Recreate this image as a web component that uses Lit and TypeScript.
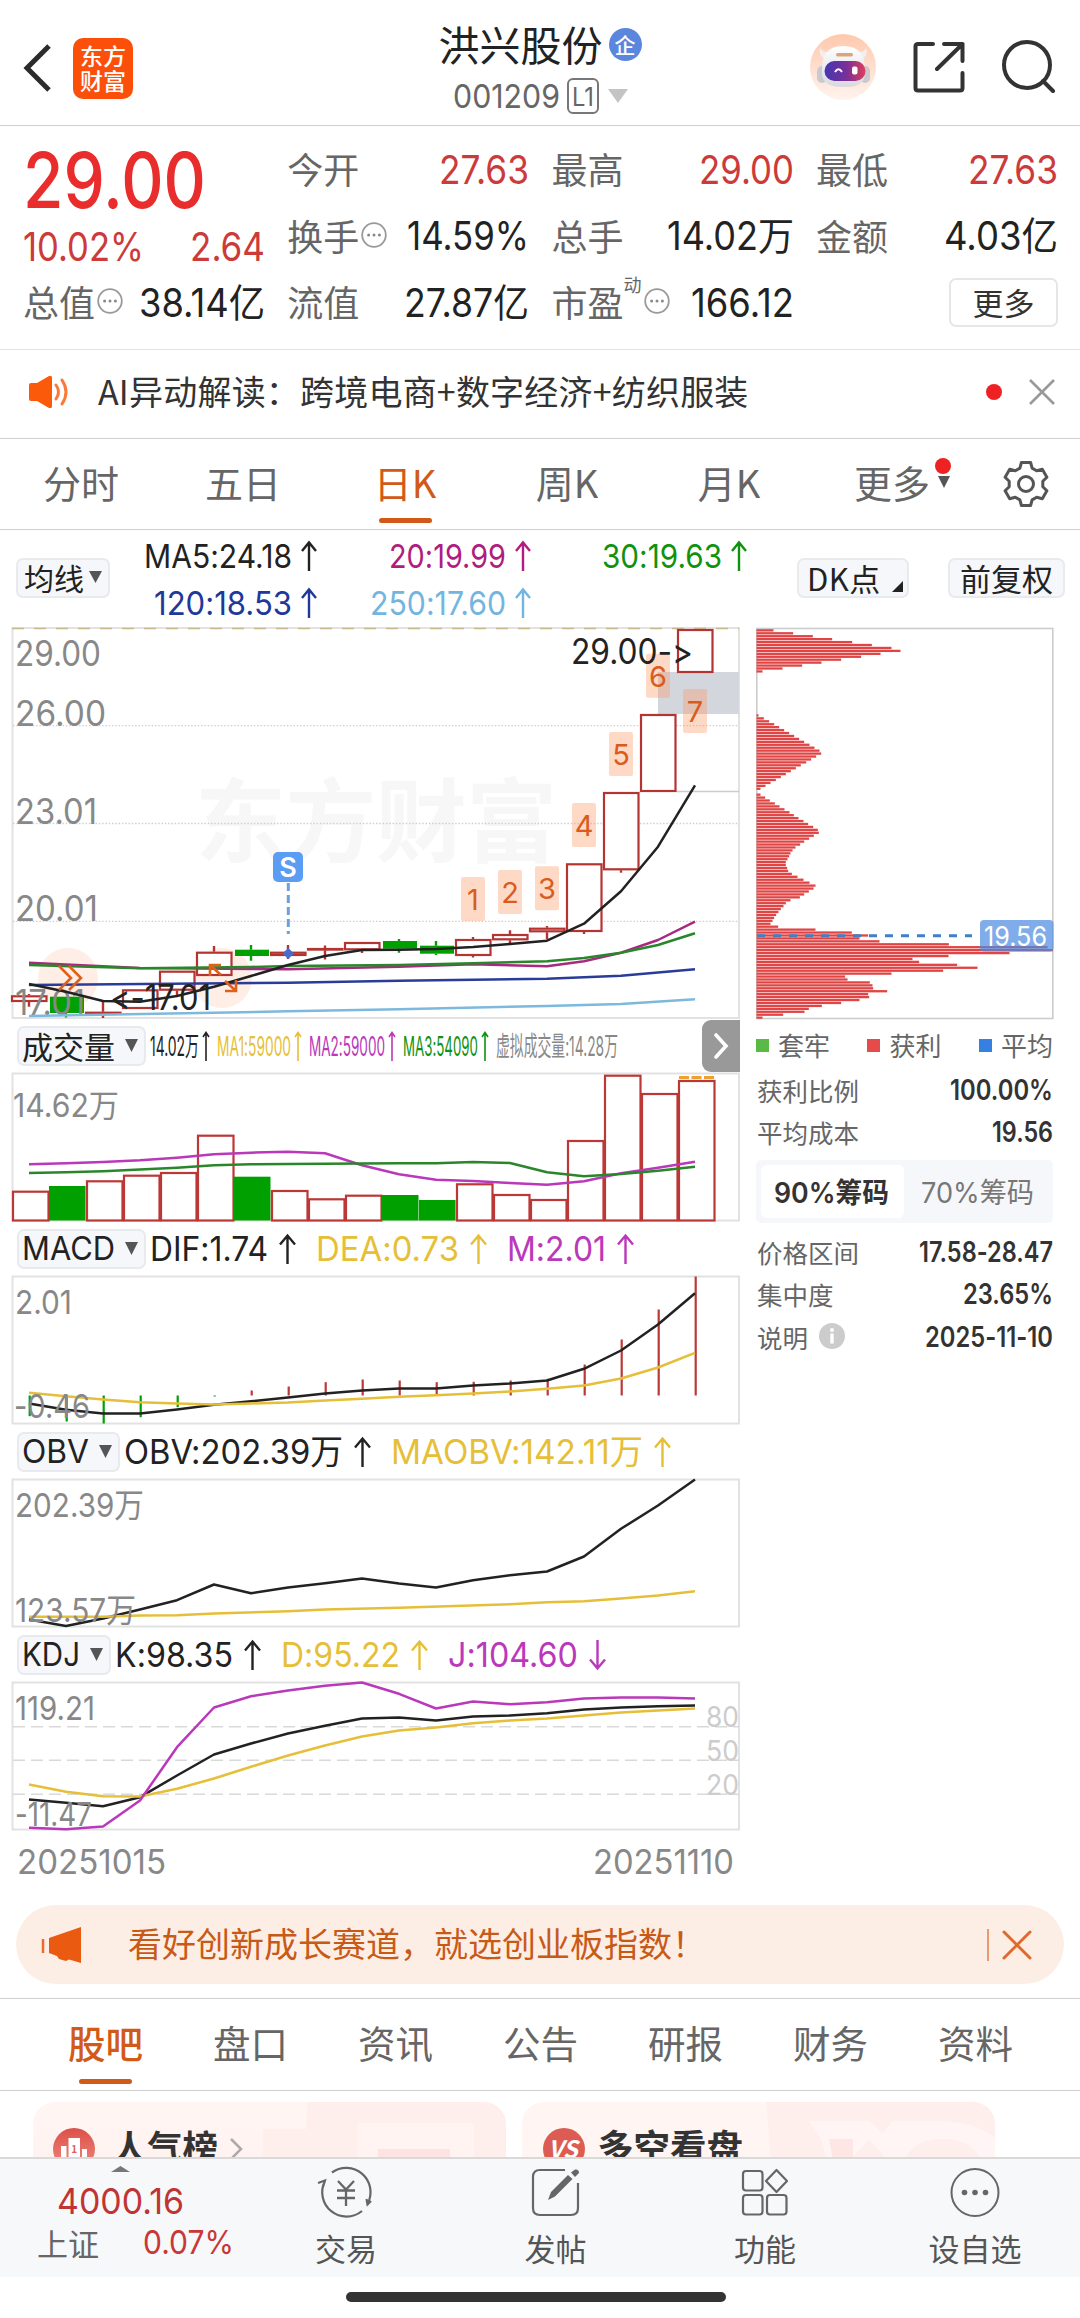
import { LitElement, html, svg, css, nothing } from "lit";
import { customElement } from "lit/decorators.js";

const INK = "#222222";
const GREY = "#888888";
const RED = "#bb3836";
const UP = "#b43432";
const GREEN = "#00a000";
const GOLD = "#e6bf38";
const VIOLET = "#ba38ba";
const FRAME = "#e2e2e2";

/** A numeric string set to an exact width, vertically centred on its cap height. */
const num = (text: string, w: number, size: number, color = "#333333", weight = 400) => {
  const h = Math.round(size * 1.1);
  return html`<svg class="num" width=${w} height=${h} viewBox="0 0 ${w} ${h}">
    <text x="0" y=${h / 2 + size * 0.364} font-size=${size} fill=${color} font-weight=${weight}
      textLength=${w} lengthAdjust="spacingAndGlyphs">${text}</text>
  </svg>`;
};

/** Text inside a chart. */
const mark = (text: string, x: number, y: number, w: number, size: number, color = GREY) =>
  svg`<text x=${x} y=${y} font-size=${size} fill=${color} textLength=${w} lengthAdjust="spacingAndGlyphs">${text}</text>`;

const arrow = (color: string, w = 17, down = false) => html`<svg class="num" width=${w} height="30" viewBox="0 0 ${w} 30">
  <path d=${down
    ? `M${w / 2} 0V28M1 ${28 - w / 2}L${w / 2} 28.5L${w - 1} ${28 - w / 2}`
    : `M${w / 2} 30V2M1 ${2 + w / 2}L${w / 2} 1.5L${w - 1} ${2 + w / 2}`}
    fill="none" stroke=${color} stroke-width=${w > 10 ? 2.4 : 1.6}></path>
</svg>`;

const X = (i: number) => 29 + i * 37;

/** Polyline through [index, y] pairs. */
const line = (pts: number[][], color: string, w = 2.5) =>
  svg`<polyline points=${pts.map(([i, y]) => `${X(i)},${y}`).join(" ")} fill="none" stroke=${color} stroke-width=${w} stroke-linejoin="round"></polyline>`;

const seq = (ys: number[]) => ys.map((y, i) => [i, y]);

// [body top, body bottom, wick top, wick bottom, 1 = up / 0 = down]
const CANDLES = [
  [995.3, 1002, 994, 1006.7, 1], [996.7, 1013, 996.7, 1017.5, 0], [1011.7, 1013, 1002, 1018, 1],
  [989.3, 1009, 989.3, 1009, 1], [970.7, 990.7, 970.7, 995, 1], [951.7, 976, 946, 976, 1],
  [949.7, 956, 945, 960.7, 0], [951.7, 956, 945, 959, 1], [948, 950.3, 945.5, 959.5, 1],
  [942, 950.3, 942, 953, 1], [941, 948.7, 939, 952.7, 0], [945.7, 953.7, 941, 955, 0],
  [939, 956, 937, 957.5, 1], [934, 940.3, 930.3, 943.3, 1], [927.7, 932.3, 926, 939.3, 1],
  [863.3, 932, 863.3, 934, 1], [792, 870.3, 792, 872.7, 1], [714, 792, 714, 792, 1], [629, 673, 629, 673, 1],
];

const VOLUME: [number, number][] = [
  [1190.7, 1], [1186, 0], [1180.3, 1], [1174.7, 1], [1172, 1], [1134.7, 1], [1176.7, 0], [1190, 1], [1198.3, 1],
  [1194.7, 1], [1195, 0], [1200, 0], [1183.3, 1], [1194, 1], [1199, 1], [1140, 1], [1074.7, 1], [1093, 1], [1080, 1],
];

const HIST = [1416.7, 1422, 1424, 1417.7, 1407.7, 1397, 1391, 1387, 1382.7, 1380, 1381, 1382.7, 1382.3, 1381, 1379.3, 1365, 1340, 1310, 1277];

const COUNT_TOPS = [877, 870, 866.3, 803, 732, 653.7, 689];

// Length of every price level in the chip distribution, top to bottom, in thirds of a pixel.
const CHIPS = [
  51, 110, 169, 227, 287, 346, 405, 432, 372, 314, 254, 195, 137, 78, 18,
  0, 0, 0, 0, 0, 0, 0, 0, 0, 0, 0, 0, 0, 0,
  6, 22, 38, 53, 68, 83, 98, 113, 128, 143, 159, 174, 189, 194, 179, 164, 149, 133, 118, 103, 88, 73, 58, 42, 27, 12,
  0, 12, 26, 40, 55, 69, 84, 99, 112, 126, 141, 155, 170, 184, 187, 172, 158, 143, 131, 117, 108, 102, 98, 93, 88, 88,
  92, 95, 106, 123, 141, 159, 177, 171, 157, 143, 130, 102, 88, 81, 73, 66, 59, 53, 48, 42, 65, 177, 286, 335, 309,
  369, 577, 873, 889, 759, 576, 468, 488, 602, 663, 560, 405, 266, 273, 340, 348, 350, 392, 335, 338, 309, 254, 196,
  157, 144, 80, 18,
];

const gearPath = () => {
  const pts: string[] = [];
  for (let k = 0; k < 6; k++) {
    for (const [da, r] of [[-21, 17], [-12, 22], [12, 22], [21, 17]]) {
      const a = ((k * 60 - 90 + da) * Math.PI) / 180;
      pts.push(`${(24 + r * Math.cos(a)).toFixed(1)} ${(24 + r * Math.sin(a)).toFixed(1)}`);
    }
  }
  return `M${pts.join("L")}Z`;
};

const dots = html`<svg class="dots" width="26" height="28" viewBox="0 0 26 28">
  <circle cx="13" cy="14" r="11.8" fill="none" stroke="#9a9a9a" stroke-width="1.8"></circle>
  <circle cx="7.6" cy="14" r="1.5" fill="#888"></circle><circle cx="13" cy="14" r="1.5" fill="#888"></circle><circle cx="18.4" cy="14" r="1.5" fill="#888"></circle>
</svg>`;

const caret = (w = 12, h = 12, color = "#555") =>
  html`<svg class="num" width=${w} height=${h} viewBox="0 0 ${w} ${h}"><path d="M0 0H${w}L${w / 2} ${h}Z" fill=${color}></path></svg>`;

type Item = [string, number, string, boolean?];

@customElement("app-root")
export class AppRoot extends LitElement {
  static styles = css`
    :host { display: block; width: 1080px; height: 2318px; background: #fff; overflow: hidden;
      font-family: Inter, "Noto Sans CJK SC", sans-serif; color: #333; line-height: 1; }
    * { box-sizing: border-box; }
    svg { display: block; flex: none; }
    text { font-family: Inter, "Noto Sans CJK SC", sans-serif; font-variant-ligatures: none; font-feature-settings: "calt" 0; }
    .num { overflow: visible; }
    .cjk { font-family: "Noto Sans CJK SC", sans-serif; white-space: nowrap; }

    .top { height: 126px; border-bottom: 1px solid #cfcfcf; display: grid; grid-template-columns: 400px 1fr 400px; padding: 0 23px; margin: 0; }
    .top-left { display: flex; align-items: center; gap: 20px; padding-top: 9px; }
    .logo { width: 60px; height: 61px; border-radius: 10px; background: #fb4f0a; color: #fff; font-size: 23px; font-weight: 500;
      line-height: 25px; display: grid; place-content: center; text-align: center; }
    .title { display: flex; flex-direction: column; align-items: center; padding-top: 21px; }
    .name { display: flex; align-items: center; gap: 6px; font-size: 41px; height: 44px; color: #222; }
    .badge { width: 33px; height: 33px; border-radius: 50%; background: #5b86de; color: #fff; font-size: 21px; font-weight: 500; display: grid; place-items: center; margin-top: 3px; }
    .code { display: flex; align-items: center; height: 62px; }
    .level { width: 32px; height: 36px; border: 2px solid #777; border-radius: 6px; margin: 0 9px 0 7px; display: grid; place-items: center; }
    .top-right { display: flex; align-items: center; justify-content: flex-end; padding: 7px 2px 0 0; gap: 36px; }

    .quote { height: 224px; border-bottom: 1px solid #e2e2e2; padding: 10px 22px 0 23px; display: grid; grid-template-columns: repeat(4, 242px); column-gap: 22.3px; }
    .col { display: grid; grid-template-rows: 66px 67px 66px; }
    .col.first { grid-template-rows: 87px 46px 66px; }
    .cell { display: flex; align-items: center; justify-content: space-between; }
    .key { display: flex; align-items: center; font-size: 36px; color: #666; height: 40px; padding-bottom: 2px; }
    .sup { font-size: 18px; align-self: flex-start; margin-top: -7px; }
    .dots { margin: 0 1px 0 2px; }
    .more { margin-left: auto; width: 109px; height: 49px; border: 2px solid #e6e6e6; border-radius: 7px; font-size: 31px; color: #333; display: grid; place-items: center; padding-bottom: 2px; }

    .ai { height: 89px; border-bottom: 1px solid #cfcfcf; display: flex; align-items: center; padding: 0 25px 4px 29px; font-size: 34px; color: #333; }
    .ai .msg { margin-left: 28px; flex: 1; letter-spacing: 0.2px; padding-bottom: 2px; }
    .dot { width: 16px; height: 16px; border-radius: 50%; background: #ee2222; }
    .ai .close { margin-left: 27px; }

    .tabs { height: 91px; border-bottom: 1px solid #cfcfcf; display: grid; grid-template-columns: repeat(5, 162px) 150px 120px; font-size: 38px; color: #666; }
    .tab { position: relative; display: flex; align-items: center; justify-content: center; padding-bottom: 4px; }
    .tab.on { color: #d25a18; }
    .tab.on::after { content: ""; position: absolute; bottom: 6px; left: 50%; width: 53px; height: 5px; margin-left: -26.5px; border-radius: 3px; background: #d25a18; }
    .tab .dot { position: absolute; left: 125px; top: 19px; }
    .tab.more-tab { justify-content: flex-start; padding-left: 44px; gap: 8px; }
    .tab.gear { padding: 0 0 0 12px; }

    .ma { height: 96px; display: flex; align-items: center; padding: 0 15px 0 16px; }
    .pill { height: 40px; border: 2px solid #e8eaee; border-radius: 7px; background: #f6f7fa; font-size: 30px; color: #222; display: flex; align-items: center; flex: none; padding: 0 6px 2px; gap: 5px; }
    .pill.end { width: 112px; justify-content: space-between; padding: 0 4px 2px 8px; letter-spacing: 0.4px; font-size: 31px; }
    .pill.adjust { width: 117px; justify-content: center; margin-left: auto; font-size: 31px; }
    .pill.end svg { align-self: flex-end; margin-bottom: 2px; }
    .ma-grid { display: grid; grid-template-columns: 208px 214px 216px; grid-template-rows: 47px 47px; margin: 3px 50px 0 -1px; }
    .ma-item { display: flex; align-items: center; justify-content: flex-end; gap: 9px; }

    .body { display: flex; height: 1264px; }
    .charts { width: 751px; flex: none; }
    .ind { height: 53px; display: flex; align-items: center; padding-left: 17px; }
    .ind .pill { justify-content: space-between; padding: 0 6px 1px 3px; margin-right: 4px; }
    .ind.vol { height: 52px; }
    .ind.vol .pill { font-size: 31px; }
    .item { display: flex; align-items: center; gap: 11px; margin-right: 20px; }
    .vol .item { gap: 3px; margin-right: 7px; }
    .expand { margin-left: auto; margin-right: 11px; width: 38px; height: 52px; border-radius: 9px 0 0 9px; background: #999; display: grid; place-items: center; }
    .dates { display: flex; justify-content: space-between; padding: 12px 17px 0; }

    .chips { width: 329px; padding: 0 27px 0 5px; }
    .legend { display: flex; justify-content: space-between; height: 46px; align-items: center; font-size: 26px; color: #666; margin-top: 2px; }
    .legend span { display: flex; align-items: center; gap: 9px; }
    .sq { width: 13px; height: 13px; }
    .sq.g { background: #5bb946; } .sq.r { background: #e64b4b; } .sq.b { background: #3580e0; }
    .row { display: flex; justify-content: space-between; align-items: center; height: 42.5px; font-size: 25.5px; color: #666; padding-left: 1px; }
    .row .info { display: flex; align-items: center; gap: 11px; }
    .i { width: 26px; height: 26px; border-radius: 50%; background: #ccc; display: grid; place-items: center; }
    .toggle { height: 63px; margin: 7px 0 7px; background: #f6f7fa; border-radius: 5px; padding: 5px; display: grid; grid-template-columns: 143px 1fr; }
    .toggle div { display: grid; place-items: center; border-radius: 6px; padding: 1px 2px 0 0; }
    .toggle .off { padding: 1px 0 0 3px; }
    .toggle .on { background: #fff; }

    .promo { margin: 15px 16px 0; height: 79px; border-radius: 40px; background: #fdeee5; display: flex; align-items: center; padding: 0 32px 0 25px; font-size: 34px; color: #c85a18; }
    .promo .msg { margin-left: 46px; flex: 1; padding-bottom: 3px; }
    .vline { width: 2px; height: 32px; background: #e79a72; margin-right: 13px; }
    .sections { margin-top: 14px; height: 93px; border-top: 1px solid #cfcfcf; border-bottom: 1px solid #cfcfcf; display: grid; grid-template-columns: repeat(7, 145px); padding-left: 33px; font-size: 37.5px; color: #666; }
    .sections .tab { padding-bottom: 5px; }
    .sections .tab.on { font-weight: 500; }
    .cards { height: 66px; padding: 11px 33px 0; display: flex; gap: 16px; overflow: hidden; }
    .card { width: 473px; height: 120px; flex: none; border-radius: 22px; overflow: hidden; }
    .card text { font-family: "Noto Sans CJK SC", sans-serif; font-weight: 700; }
    .nav { height: 120px; background: #f7f8fa; border-top: 2px solid #d9d9d9; display: grid; grid-template-columns: 241px 210px 209px 210px 210px; }
    .index { display: flex; flex-direction: column; align-items: center; padding-top: 7px; }
    .index-val { margin: 9px 0 1px; }
    .index-row { display: flex; align-items: center; gap: 44px; font-size: 31px; color: #666; padding-left: 37px; width: 100%; height: 40px; }
    .nav-item { display: flex; flex-direction: column; align-items: center; font-size: 31px; color: #555; padding-top: 7px; gap: 14px; }
    .home { width: 380px; height: 10px; border-radius: 5px; background: #333; margin: 15px 0 0 346px; }
  `;

  private header() {
    return html`<header class="top">
      <div class="top-left">
        <svg width="30" height="50" viewBox="0 0 30 50"><path d="M26 3L4 25L26 47" fill="none" stroke="#2b2b2b" stroke-width="5"></path></svg>
        <div class="logo cjk">东方<br />财富</div>
      </div>
      <div class="title">
        <div class="name cjk">洪兴股份<span class="badge">企</span></div>
        <div class="code">${num("001209", 107, 33, "#666")}<span class="level">${num("L1", 22, 26, "#666")}</span>${caret(20, 14, "#c4c4c4")}</div>
      </div>
      <div class="top-right">
        <svg width="68" height="68" viewBox="0 0 68 68">
          <defs>
            <linearGradient id="halo" x1="0" y1="0" x2="0" y2="1"><stop offset="0" stop-color="#ffc8ad"></stop><stop offset="1" stop-color="#fff4ee"></stop></linearGradient>
            <linearGradient id="visor"><stop offset="0" stop-color="#4636b0"></stop><stop offset=".55" stop-color="#7a3098"></stop><stop offset="1" stop-color="#e04058"></stop></linearGradient>
            <linearGradient id="shell" x1="0" y1="0" x2="0" y2="1"><stop offset="0" stop-color="#ffffff"></stop><stop offset="1" stop-color="#d9d9df"></stop></linearGradient>
          </defs>
          <circle cx="34" cy="34" r="33" fill="url(#halo)"></circle>
          <path d="M11 15Q9 24 17 26L22 19Q14 20 11 15ZM57 15Q60 24 52 26L47 19Q55 20 57 15Z" fill="#f3eeee"></path>
          <rect x="8" y="33" width="10" height="17" rx="5" fill="#c9c9d0"></rect><rect x="51" y="33" width="10" height="17" rx="5" fill="#c9c9d0"></rect>
          <path d="M13 38Q12 13 34 13Q57 13 56 38Q57 55 35 54Q12 55 13 38Z" fill="url(#shell)"></path>
          <rect x="27" y="20" width="17" height="3.5" rx="1.7" fill="#d8a57c"></rect>
          <rect x="15.500" y="28" width="41" height="20" rx="10" fill="url(#visor)"></rect>
          <path d="M26 39Q29.500 33.500 33 39" fill="none" stroke="#fff" stroke-width="2"></path><rect x="43" y="33.500" width="5.500" height="8" rx="2" fill="#fff"></rect>
        </svg>
        <svg width="52" height="52" viewBox="0 0 52 52"><path d="M20 3H5Q2.500 3 2.500 5.500V47Q2.500 49.500 5 49.500H47Q49.500 49.500 49.500 47V32M31 3H49.500V20M49.500 3L24 28" fill="none" stroke="#333" stroke-width="4" stroke-linecap="round" stroke-linejoin="round"></path></svg>
        <svg width="54" height="54" viewBox="0 0 54 54"><circle cx="26" cy="25" r="23" fill="none" stroke="#333" stroke-width="4"></circle><path d="M42 41L52 51" stroke="#333" stroke-width="4" stroke-linecap="round"></path></svg>
      </div>
    </header>`;
  }

  private cell(key: unknown, value: string, w: number, color = "#222") {
    return html`<div class="cell"><span class="key cjk">${key}</span>${num(value, w, 39, color)}</div>`;
  }

  private quote() {
    const r = "#cc3a3a";
    return html`<section class="quote">
      <div class="col first">
        <div class="cell">${num("29.00", 183, 77, "#e92c2c", 500)}</div>
        <div class="cell">${num("10.02%", 121, 39, r)}${num("2.64", 75, 39, r)}</div>
        ${this.cell(html`总值${dots}`, "38.14亿", 126)}
      </div>
      <div class="col">
        ${this.cell("今开", "27.63", 90, r)}${this.cell(html`换手${dots}`, "14.59%", 122)}${this.cell("流值", "27.87亿", 125)}
      </div>
      <div class="col">
        ${this.cell("最高", "29.00", 95, r)}${this.cell("总手", "14.02万", 127)}
        ${this.cell(html`市盈<span class="sup">动</span>${dots}`, "166.12", 103)}
      </div>
      <div class="col">
        ${this.cell("最低", "27.63", 90, r)}${this.cell("金额", "4.03亿", 114)}
        <div class="cell"><span class="more cjk">更多</span></div>
      </div>
    </section>`;
  }

  private notice() {
    return html`<section class="ai">
      <svg width="41" height="32" viewBox="0 0 41 32"><path d="M0 9Q0 7 2 7H8L20 0Q23 -1 23 2V30Q23 33 20 32L8 25H2Q0 25 0 23Z" fill="#fa5a0a"></path><path d="M27 9Q32 16 27 23M33 4Q41 16 33 28" fill="none" stroke="#fa7a3a" stroke-width="3" stroke-linecap="round"></path></svg>
      <span class="msg cjk">AI异动解读：跨境电商+数字经济+纺织服装</span>
      <span class="dot"></span>
      <svg class="close" width="26" height="26" viewBox="0 0 26 26"><path d="M1 1L25 25M25 1L1 25" stroke="#999" stroke-width="2.600"></path></svg>
    </section>`;
  }

  private periods() {
    return html`<nav class="tabs cjk">
      ${["分时", "五日", "日K", "周K", "月K"].map((t) => html`<div class="tab ${t === "日K" ? "on" : ""}">${t}</div>`)}
      <div class="tab more-tab">更多${caret(12, 12)}<span class="dot"></span></div>
      <div class="tab gear"><svg width="48" height="48" viewBox="0 0 48 48"><path d=${gearPath()} fill="none" stroke="#555" stroke-width="3" stroke-linejoin="round"></path><circle cx="24" cy="24" r="7.500" fill="none" stroke="#555" stroke-width="3"></circle></svg></div>
    </nav>`;
  }

  private averages() {
    const items: Item[] = [
      ["MA5:24.18", 148, INK], ["20:19.99", 117, "#b01c80"], ["30:19.63", 120, "#0f930f"],
      ["120:18.53", 138, "#20389a"], ["250:17.60", 136, "#72b6e0"],
    ];
    return html`<section class="ma">
      <div class="pill cjk">均线${caret(13, 12)}</div>
      <div class="ma-grid">${items.map(([t, w, c]) => html`<div class="ma-item">${num(t, w, 33, c)}${arrow(c, 16)}</div>`)}</div>
      <div class="pill end cjk">DK点<svg width="11" height="11" viewBox="0 0 11 11"><path d="M11 0V11H0Z" fill="#222"></path></svg></div>
      <div class="pill adjust cjk">前复权</div>
    </section>`;
  }

  private indicator(name: string, w: number, items: Item[], cls = "", size = 34) {
    const small = cls === "vol";
    return html`<div class="ind ${cls}">
      <div class="pill cjk" style="width:${w}px">${/[A-Z]/.test(name) ? num(name, w - 36, 33, INK) : html`<span>${name}</span>`}${caret(13, 13)}</div>
      ${items.map(([t, tw, c, down]) => html`<div class="item">${num(t, tw, size, c)}${t.startsWith("虚") ? nothing : arrow(c, small ? 8 : 17, down)}</div>`)}
      ${small ? html`<div class="expand"><svg width="16" height="26" viewBox="0 0 16 26"><path d="M3 2L13 13L3 24" fill="none" stroke="#fff" stroke-width="3.600" stroke-linecap="round"></path></svg></div>` : nothing}
    </div>`;
  }

  private frame(y: number, h: number, body: unknown) {
    return html`<svg class="num" width="751" height=${h + 3} viewBox="0 ${y - 1.5} 751 ${h + 3}">
      <rect x="12.500" y=${y} width="726.500" height=${h} fill="none" stroke=${FRAME} stroke-width="2"></rect>${body}
    </svg>`;
  }

  private kline() {
    return html`<svg class="num" width="751" height="394" viewBox="0 626 751 394">
      <text x="195" y="855" font-size="91" textLength="362" font-weight="700" fill="#f7f7f7">东方财富</text>
      <rect x="12.500" y="628" width="726.500" height="390" fill="none" stroke=${FRAME} stroke-width="2"></rect>
      ${[725.7, 823.5, 921.3].map((y) => svg`<path d="M13 ${y}H739" stroke="#cfcfcf" stroke-width="1.300" stroke-dasharray="1.500 1.800"></path>`)}
      <path d="M12 628.500H739" stroke="#c9b98e" stroke-width="1.500" stroke-dasharray="12 10"></path>
      <path d="M676 791.500H739" stroke="#ccc" stroke-width="1.500"></path>
      <rect x="658" y="672" width="81" height="42" fill="#d3d6dc"></rect>
      <circle cx="68" cy="978" r="30" fill="#feeee6"></circle><circle cx="222" cy="978" r="30" fill="#feeee6"></circle>
      ${mark("29.00", 15, 665.5, 86, 35)}${mark("26.00", 15, 725.5, 91, 35)}${mark("23.01", 15, 823.5, 82, 35)}${mark("20.01", 15, 921, 83, 35)}
      ${CANDLES.map(([t, b, wt, wb, up], i) => {
        const c = up ? UP : GREEN;
        const x = X(i);
        return svg`<path d="M${x} ${wt}V${t}M${x} ${b}V${wb}" stroke=${c} stroke-width="2.400"></path>
          ${up
            ? svg`<rect x=${x - 17} y=${t + 1} width="34.500" height=${Math.max(b - t - 2, 0.6)} fill=${i === 18 || b - t < 3 ? "none" : "#fff"} stroke=${c} stroke-width="2.200"></rect>`
            : svg`<rect x=${x - 16} y=${t} width="34" height=${b - t} fill=${c}></rect>`}`;
      })}
      ${mark("17.01", 15, 1015, 70, 35)}
      ${line([[0, 1016], [7, 1011.3], [10, 1009.3], [14, 1006], [16, 1004], [18, 999.3]], "#7db9dd")}
      ${line([[0, 985], [7, 982.7], [10, 980.7], [14, 978.7], [16, 975.7], [18, 969.3]], "#2a3c98")}
      ${line([[0, 962.7], [3, 968], [7, 969.3], [10, 966.7], [12, 964.3], [14, 966.3], [15, 961.3], [16, 952.7], [17, 940], [18, 921.7]], "#a82a80")}
      ${line([[0, 965], [3, 968.3], [6, 967], [7, 966], [10, 965], [12, 963.3], [14, 961.3], [15, 958], [16, 952.7], [17, 945], [18, 933.3]], "#2a862a")}
      ${line(seq([984, 991.7, 1001, 1001.7, 996, 986.7, 976, 965, 956, 950, 949.7, 949, 947, 944, 940.7, 923.7, 891.3, 846.7, 785.3]), INK)}
      <path d="M59 966L71 978L59 990M69 966L81 978L69 990" fill="none" stroke="#e0601a" stroke-width="2.600"></path>
      <path d="M221 975L210 965M210 976V965H221M225 981L236 991M236 980V991H225" fill="none" stroke="#e0601a" stroke-width="2.600"></path>
      <path d="M288.300 883V934" stroke="#6ea0d8" stroke-width="3" stroke-dasharray="8 4"></path>
      <path d="M288.300 948L294 953.500L288.300 959L282.500 953.500Z" fill="#4a6cc8"></path>
      <rect x="273" y="852" width="30" height="30" rx="5" fill="#5b9cf4"></rect>
      <text x="288" y="876.500" text-anchor="middle" font-size="27" font-weight="600" fill="#fff">S</text>
      ${COUNT_TOPS.map((y, i) => svg`<rect x=${X(12 + i) - 12} y=${y} width="24" height="44" rx="2" fill="#f99a6a" fill-opacity=".38"></rect>
        <text x=${X(12 + i)} y=${y + 33} text-anchor="middle" font-size="29" fill="#d95c1c">${i + 1}</text>`)}
      ${mark("<-17.01", 110, 1010, 101, 35, INK)}
      ${mark("29.00->", 571, 663.5, 122, 35, INK)}
    </svg>`;
  }

  private volume() {
    return this.frame(1073.5, 147, svg`
      ${mark("14.62万", 13, 1116.5, 106, 32)}
      ${VOLUME.map(([y, up], i) => {
        const x = X(i) - 17;
        return up
          ? svg`<rect x=${x + 1} y=${y + 1} width="35.500" height=${1219.5 - y} fill="#fff" stroke=${RED} stroke-width="2.200"></rect>`
          : svg`<rect x=${x} y=${y} width="36.500" height=${1220.5 - y} fill=${GREEN}></rect>`;
      })}
      <path d="M679 1077.500H716" stroke="#f0a030" stroke-width="3" stroke-dasharray="10 2.500"></path>
      ${line(seq([1164.3, 1163.3, 1162, 1160.3, 1157.7, 1154.3, 1152.7, 1151.7, 1153.3, 1165.3, 1174.3, 1179.7, 1181, 1183, 1184.7, 1181.3, 1173.3, 1167.7, 1161.7]), VIOLET)}
      ${line(seq([1173, 1172.3, 1171.3, 1169.5, 1167.7, 1165.3, 1164.3, 1164, 1163.7, 1163.5, 1163.3, 1163.3, 1162, 1163, 1172.3, 1176.3, 1174, 1170.7, 1166.7]), "#2a862a")}`);
  }

  private macd() {
    return this.frame(1277, 147, svg`
      ${HIST.map((y, i) => svg`<path d="M${X(i) + 0.7} 1396V${y}" stroke=${y > 1396 ? GREEN : RED} stroke-width="2.200"></path>`)}
      ${line(seq([1404, 1410.3, 1414, 1414, 1410, 1405.3, 1401.7, 1398, 1394, 1391, 1389, 1389, 1386, 1384, 1381, 1369.3, 1351, 1325, 1293.7]), INK)}
      ${line(seq([1393.3, 1396.7, 1400, 1402.7, 1404, 1405, 1404, 1403, 1401, 1399.3, 1397.3, 1395.7, 1394, 1392, 1389.3, 1386, 1379, 1368, 1353.3]), GOLD)}
      ${mark("2.01", 15, 1314, 57, 33)}${mark("-0.46", 14, 1418.5, 76, 33)}`);
  }

  private obv() {
    return this.frame(1480, 147, svg`
      ${line(seq([1620, 1626.5, 1619, 1610, 1600.7, 1585, 1593.7, 1588, 1583.7, 1579, 1584, 1588, 1580.7, 1575.7, 1572, 1557, 1529.3, 1506, 1480]), INK)}
      ${line([[0, 1617.3], [2, 1617.3], [3, 1616], [4, 1615.7], [5, 1614], [7, 1611.7], [8, 1610], [10, 1608.3], [13, 1604.7], [14, 1602.7], [15, 1601.7], [16, 1599], [17, 1596], [18, 1591.7]], GOLD)}
      ${mark("202.39万", 15, 1517.5, 129, 33)}${mark("123.57万", 15, 1622.500, 121, 33)}`);
  }

  private kdj() {
    return this.frame(1683, 147, svg`
      ${[1727.3, 1760.7, 1794.7].map((y) => svg`<path d="M13 ${y}H739" stroke="#d9d9d9" stroke-width="1.600" stroke-dasharray="12 6"></path>`)}
      ${mark("80", 706, 1727, 33, 29, "#ccc")}${mark("50", 706, 1761, 33, 29, "#ccc")}${mark("20", 706, 1795, 33, 29, "#ccc")}
      ${line(seq([1800, 1803.3, 1806.7, 1797.7, 1776, 1755, 1744, 1734, 1726.3, 1719, 1718, 1721, 1717, 1716, 1713.7, 1710, 1708, 1706.7, 1706]), INK)}
      ${line(seq([1785, 1792.3, 1796.7, 1797, 1789.3, 1779, 1767.3, 1756, 1746, 1737, 1731, 1728, 1723.7, 1721, 1719, 1716, 1713, 1711, 1709]), GOLD)}
      ${line(seq([1828.3, 1829.7, 1827, 1801, 1747.7, 1708, 1696.7, 1691, 1686.3, 1683, 1694.3, 1709, 1702, 1704.7, 1702.7, 1699, 1698, 1698, 1699]), VIOLET)}
      ${mark("119.21", 15, 1720.7, 80, 33)}${mark("-11.47", 15, 1826, 77, 33)}`);
  }

  private chips() {
    const row = (k: unknown, v: string, w: number) => html`<div class="row cjk">${k}${num(v, w, 28, "#333", 600)}</div>`;
    return html`<aside class="chips">
      <svg width="298" height="394" viewBox="755 626 298 394">
        <rect x="755.800" y="628.500" width="296" height="390" fill="none" stroke="#ccc" stroke-width="1.600"></rect>
        ${CHIPS.map((l, i) => (l ? svg`<rect x="755.500" y=${629.2 + i * 2.934} width=${l / 3} height="2.300" fill="#e04444"></rect>` : nothing))}
        <path d="M756 935.700H971" stroke="#4080c4" stroke-width="3" stroke-dasharray="8 8"></path>
        <rect x="979" y="920" width="73.500" height="31.500" rx="4" fill="#4a8ae0" fill-opacity=".7"></rect>
        <text x="983" y="945.500" font-size="27" fill="#fff" textLength="63" lengthAdjust="spacingAndGlyphs">19.56</text>
      </svg>
      <div class="legend cjk"><span><i class="sq g"></i>套牢</span><span><i class="sq r"></i>获利</span><span><i class="sq b"></i>平均</span></div>
      ${row("获利比例", "100.00%", 103)}${row("平均成本", "19.56", 61)}
      <div class="toggle"><div class="on">${num("90%筹码", 115, 28, "#333", 600)}</div><div class="off">${num("70%筹码", 113, 28, "#777")}</div></div>
      ${row("价格区间", "17.58-28.47", 134)}${row("集中度", "23.65%", 90)}
      ${row(html`<span class="info">说明<i class="i"><svg width="6" height="16" viewBox="0 0 6 16"><circle cx="3" cy="2" r="2" fill="#fff"></circle><rect x="1.300" y="5.500" width="3.400" height="10" fill="#fff"></rect></svg></i></span>`, "2025-11-10", 128)}
    </aside>`;
  }

  private promo() {
    return html`<section class="promo">
      <svg width="41" height="36" viewBox="0 0 41 36"><path d="M2 12V26" stroke="#ee6a2a" stroke-width="2.500"></path><path d="M8 11L40 0V36L28 32.500L25 34L18 32L16 29L8 26Z" fill="#ea5a10"></path></svg>
      <span class="msg cjk">看好创新成长赛道，就选创业板指数！</span>
      <span class="vline"></span>
      <svg width="30" height="30" viewBox="0 0 30 30"><path d="M2 2L28 28M28 2L2 28" stroke="#e06a2a" stroke-width="3" stroke-linecap="round"></path></svg>
    </section>`;
  }

  private cards() {
    return html`<section class="cards">
      <svg class="card" width="473" height="120" viewBox="33 2102 473 120">
        <defs><linearGradient id="cardbg" x1="0" y1="0" x2="0" y2="1"><stop offset="0" stop-color="#fff6f4"></stop><stop offset="1" stop-color="#fff0ee"></stop></linearGradient>
          <linearGradient id="medal" x1="0" y1="0" x2="0" y2="1"><stop offset="0" stop-color="#dc5048"></stop><stop offset="1" stop-color="#f08a80"></stop></linearGradient></defs>
        <rect x="33" y="2102" width="473" height="120" fill="url(#cardbg)"></rect>
        <path d="M308 2102H506V2222H263V2129H306Z" fill="#feefed"></path>
        <rect x="357" y="2123" width="117" height="60" rx="4" fill="#fff4f2"></rect><rect x="378" y="2149" width="72" height="30" fill="#fde4e2"></rect>
        <circle cx="74" cy="2149" r="21" fill="url(#medal)"></circle>
        <path d="M61 2146H66.500V2170H61ZM68.500 2138H80V2170H68.500ZM82 2149H87V2170H82Z" fill="#fff"></path>
        <text x="74.300" y="2153" font-size="10" text-anchor="middle" fill="#e06058">1</text>
        <text x="112" y="2161" font-size="35.500" fill="#333" textLength="106">人气榜</text>
        <path d="M231 2139L241 2149L231 2159" fill="none" stroke="#aaa" stroke-width="2.500"></path>
      </svg>
      <svg class="card" width="473" height="120" viewBox="521 2102 473 120">
        <rect x="521" y="2102" width="473" height="120" fill="#fff5f3"></rect>
        <path d="M765 2102H994V2222H775Z" fill="#feefed"></path>
        <path d="M808 2121H868L882 2133L892 2121H940Q975 2122 994 2138V2160H980Q972 2139 940 2139Q915 2139 905 2157H884L868 2139L852 2157H825L820 2139Z" fill="#fff5f4"></path>
        <path d="M828 2139H852V2160H832Z" fill="#fde6e4"></path>
        <circle cx="563" cy="2149" r="21" fill="#dc5c54"></circle>
        <text x="562" y="2158" font-size="24" font-style="italic" text-anchor="middle" fill="#fff">VS</text>
        <text x="596" y="2161" font-size="36.500" fill="#333" textLength="146">多空看盘</text>
      </svg>
    </section>`;
  }

  private bottom() {
    const s = "#666";
    return html`<nav class="nav">
      <div class="index">
        <svg width="19" height="6" viewBox="0 0 19 6"><path d="M0 6L9.500 0L19 6Z" fill="#777"></path></svg>
        <div class="index-val">${num("4000.16", 127, 36, "#c03434")}</div>
        <div class="index-row cjk">上证${num("0.07%", 91, 33, "#c83838")}</div>
      </div>
      <div class="nav-item cjk">
        <svg width="58" height="52" viewBox="317 2166 58 52"><path d="M332 2172.500A24.300 24.300 0 0 1 368 2203M371 2201L367.500 2204.500L366.500 2199M362 2211A24.300 24.300 0 0 1 325 2181M318 2183L325 2180.500L323 2187" fill="none" stroke=${s} stroke-width="2.200"></path><path d="M338 2181L346 2189.500L354 2181M337 2190.500H355M337 2198H355M346 2189.500V2206" fill="none" stroke=${s} stroke-width="2.300"></path></svg>交易
      </div>
      <div class="nav-item cjk">
        <svg width="50" height="52" viewBox="531 2166 50 52"><path d="M565 2170H540Q533 2170 533 2177V2208Q533 2215 540 2215H571Q578 2215 578 2208V2183" fill="none" stroke=${s} stroke-width="2.200"></path><path d="M548 2200L551 2192L568 2175L572.500 2179L555 2196.500ZM571 2172.500L575 2169.500Q579 2169 579 2173L575 2177Z" fill=${s}></path></svg>发帖
      </div>
      <div class="nav-item cjk">
        <svg width="50" height="52" viewBox="740 2166 50 52"><g fill="none" stroke=${s} stroke-width="2.200" stroke-linejoin="round"><rect x="743" y="2171" width="19.500" height="19.500" rx="3"></rect><rect x="743" y="2195" width="19.500" height="19.500" rx="3"></rect><rect x="767" y="2195" width="19.500" height="19.500" rx="3"></rect><path d="M776.500 2170L787 2181L776.500 2192L766 2181Z"></path></g></svg>功能
      </div>
      <div class="nav-item cjk">
        <svg width="52" height="52" viewBox="0 0 52 52"><circle cx="26" cy="26.500" r="23.500" fill="none" stroke=${s} stroke-width="2"></circle><circle cx="15.500" cy="26.500" r="2.800" fill=${s}></circle><circle cx="26" cy="26.500" r="2.800" fill=${s}></circle><circle cx="36.500" cy="26.500" r="2.800" fill=${s}></circle></svg>设自选
      </div>
    </nav><div class="home"></div>`;
  }

  render() {
    return html`
      ${this.header()}${this.quote()}${this.notice()}${this.periods()}${this.averages()}
      <main class="body">
        <div class="charts">
          ${this.kline()}
          ${this.indicator("成交量", 129, [["14.02万", 49, INK], ["MA1:59000", 74, GOLD], ["MA2:59000", 76, VIOLET], ["MA3:54090", 75, "#0f930f"], ["虚拟成交量:14.28万", 122, GREY]], "vol", 27)}
          ${this.volume()}
          ${this.indicator("MACD", 129, [["DIF:1.74", 118, INK], ["DEA:0.73", 143, GOLD], ["M:2.01", 99, VIOLET]])}
          ${this.macd()}
          ${this.indicator("OBV", 103, [["OBV:202.39万", 219, INK], ["MAOBV:142.11万", 252, GOLD]])}
          ${this.obv()}
          ${this.indicator("KDJ", 94, [["K:98.35", 118, INK], ["D:95.22", 119, GOLD], ["J:104.60", 130, VIOLET, true]])}
          ${this.kdj()}
          <div class="dates">${num("20251015", 149, 34, GREY)}${num("20251110", 141, 34, GREY)}</div>
        </div>
        ${this.chips()}
      </main>
      ${this.promo()}
      <nav class="sections cjk">
        ${["股吧", "盘口", "资讯", "公告", "研报", "财务", "资料"].map((t, i) => html`<div class="tab ${i === 0 ? "on" : ""}">${t}</div>`)}
      </nav>
      ${this.cards()}${this.bottom()}
    `;
  }
}
